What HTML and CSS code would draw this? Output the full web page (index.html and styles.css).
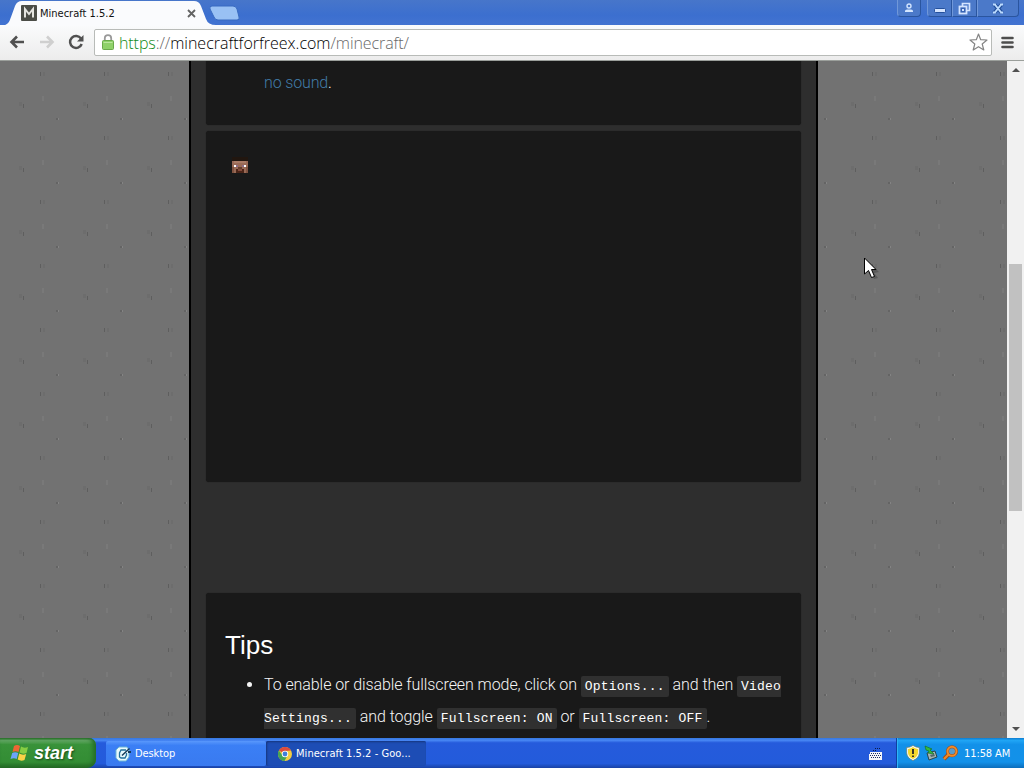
FILE: index.html
```
<!DOCTYPE html>
<html lang="en">
<head>
  <meta charset="UTF-8">
  <title>Minecraft 1.5.2</title>
  <link rel="stylesheet" href="styles.css">
</head>
<body>
  <div class="tabstrip">
    <svg class="tab-shapes" width="250" height="26" viewBox="0 0 250 26">
      <path d="M0 26 C9 25 9 22 11 17 L15 6 Q17 1 22 1 H194 Q199 1 201 6 L206 19 Q208 25 216 25 V26 Z" fill="#fafbfd" />
      <path d="M212 6 H233 Q236 6 237 9 L239 17 Q240 20 237 20 H218 Q215 20 214 17 L210 9 Q209 6 212 6 Z" fill="#99c1f4" stroke="#386ac0" />
    </svg>
    <div class="tab">
      <svg width="16" height="16" viewBox="0 0 16 16">
        <rect width="16" height="16" rx="1" fill="#4b4d47" />
        <path d="M4 12.500V4L8 9L12 4V12.500" fill="none" stroke="#e4e4e0" stroke-width="2" />
      </svg>
      <span class="tab-title">Minecraft 1.5.2</span>
      <svg class="tab-close" width="9" height="9" viewBox="0 0 9 9">
        <path d="M1 1L8 8M8 1L1 8" stroke="#636363" stroke-width="1.8" />
      </svg>
    </div>
    <div class="window-buttons">
      <div class="win-btn user">
        <svg width="10" height="10" viewBox="0 0 10 10"><circle cx="5" cy="3" r="2" fill="#4b78c8" stroke="#d4e6ff" stroke-width="1.4" /><path d="M1 9V8Q1 6.5 3 6.5H7Q9 6.5 9 8V9Z" fill="#d4e6ff" /></svg>
      </div>
      <div class="win-group">
        <div class="win-btn min"><svg width="12" height="10" viewBox="0 0 12 10"><rect x=".5" y="5.5" width="11" height="4" rx="1" fill="#d4e4ff" stroke="#24509c" /></svg></div>
        <div class="win-btn max"><svg width="13" height="13" viewBox="0 0 13 13"><path d="M4.5 4V1.5H11.5V8.5H9" fill="none" stroke="#d4e4ff" stroke-width="1.7" /><rect x="1.5" y="4.5" width="7" height="7" fill="#3764b5" stroke="#d4e4ff" stroke-width="1.8" /><rect x="4" y="7" width="2" height="2" fill="#d4e4ff" /></svg></div>
        <div class="win-btn close"><svg width="12" height="11" viewBox="0 0 12 11"><path d="M2 1L10 10M10 1L2 10" stroke="#24509c" stroke-width="4" /><path d="M2.500 1L9.500 10M9.500 1L2.500 10M1 1.500H4M8 1.500H11M1 9.500H4M8 9.500H11" stroke="#bddcff" stroke-width="1.9" /></svg></div>
      </div>
    </div>
  </div>

  <div class="toolbar">
    <svg class="nav-icon" width="16" height="14" viewBox="0 0 16 14"><path d="M15 7H3M8 1.5L2.5 7L8 12.5" fill="none" stroke="#505050" stroke-width="2.6" /></svg>
    <svg class="nav-icon" width="16" height="14" viewBox="0 0 16 14"><path d="M1 7H13M8 1.5L13.5 7L8 12.5" fill="none" stroke="#cfcfcf" stroke-width="2.6" /></svg>
    <svg class="nav-icon" width="16" height="16" viewBox="0 0 16 16"><path d="M13 4.5A6 6 0 1 0 13.7 10" fill="none" stroke="#505050" stroke-width="2.5" /><path d="M15.5 1V7.5H9Z" fill="#505050" /></svg>
    <div class="address">
      <svg class="lock" width="12" height="16" viewBox="0 0 12 16">
        <path d="M2.8 8V4.5Q2.8 1.2 6 1.2Q9.2 1.2 9.2 4.5V8" fill="none" stroke="#999" stroke-width="1.8" />
        <rect x=".5" y="6.5" width="11" height="9" rx="1" fill="#8fd169" stroke="#6aa94a" />
        <path d="M1.500 8.500H10.500" stroke="#bce69f" />
      </svg>
      <div class="url"><span class="secure">https</span>://<span class="host">minecraftforfreex.com</span>/minecraft/</div>
      <svg class="star" width="19" height="18" viewBox="0 0 19 18"><path d="M9.500 1L11.700 6.700L18 7L13.200 11L14.800 17L9.500 13.700L4.200 17L5.800 11L1 7L7.300 6.700Z" fill="#fff" stroke="#858585" stroke-width="1.2" stroke-linejoin="round" /></svg>
    </div>
    <svg class="menu-icon" width="13" height="13" viewBox="0 0 13 13"><path d="M1.500 2H11.500M1.500 6.500H11.500M1.500 11H11.500" stroke="#4d4d4d" stroke-width="2.6" stroke-linecap="round" /></svg>
  </div>

  <div class="viewport">
    <div class="page">
      <div class="container">
        <div class="panel panel-sound"><p><a class="link">no sound</a>.</p></div>
        <div class="panel panel-game">
          <svg width="16" height="17" viewBox="0 0 16 17" shape-rendering="crispEdges">
            <path d="M0 1H16V5H0Z" fill="#21160f" />
            <path d="M0 5H16V17H0Z" fill="#996a56" />
            <path d="M2 5H14V7H2Z" fill="#a97b66" />
            <path d="M0 11H2V17H0ZM14 11H16V17H14Z" fill="#805340" />
            <path d="M2 9H4V11H2ZM12 9H14V11H12Z" fill="#fff" />
            <path d="M4 9H6V11H4ZM10 9H12V11H10Z" fill="#8d6d85" />
            <path d="M6 11H10V13H6Z" fill="#65402f" />
            <path d="M4 13H6V17H4ZM10 13H12V17H10ZM6 15H10V17H6Z" fill="#4b2518" />
            <path d="M6 13H10V15H6Z" fill="#864b3c" />
          </svg>
        </div>
        <div class="panel panel-tips">
          <h2>Tips</h2>
          <ul>
            <li>To enable or disable fullscreen mode, click on <code>Options...</code> and then <code>Video Settings...</code> and toggle <code>Fullscreen: ON</code> or <code>Fullscreen: OFF</code>.</li>
          </ul>
        </div>
      </div>
    </div>
    <div class="scrollbar">
      <svg width="8" height="4" viewBox="0 0 8 4"><path d="M0 4L4 0L8 4Z" fill="#505050" /></svg>
      <div class="thumb"></div>
      <svg width="8" height="4" viewBox="0 0 8 4"><path d="M0 0L4 4L8 0Z" fill="#505050" /></svg>
    </div>
  </div>

  <div class="taskbar">
    <div class="start">
      <svg width="19" height="18" viewBox="0 0 19 18">
        <path d="M4 2Q7 0 10 2L8.500 8Q5.500 6.500 2.500 8Z" fill="#ee6634" />
        <path d="M11 2.500Q14 4.500 18 3L16.500 9Q13 10.500 9.500 8.500Z" fill="#86cd43" />
        <path d="M2.200 9Q5 7.500 8.200 9L6.700 15Q4 13.500 .5 15Z" fill="#6ca4fa" />
        <path d="M9.200 9.500Q12.500 11.500 16.200 10L14.500 16Q11 17.500 7.700 15.500Z" fill="#fbd247" />
      </svg>
      <span>start</span>
    </div>
    <div class="task desktop">
      <svg width="16" height="16" viewBox="0 0 16 16">
        <path d="M4 1H12L14 4V11L11 15H4L1 12V4Z" fill="#e8fafd" stroke="#6cb5d6" />
        <path d="M11 4H6L4.500 7V11L6 12H10L11.500 9V7" fill="none" stroke="#23719c" stroke-width="1.300" />
        <path d="M7 9.500L14.500 2.500" stroke="#153a59" stroke-width="1.5" />
        <path d="M13 6H16" stroke="#153a59" stroke-width="2" />
      </svg>
      <span>Desktop</span>
    </div>
    <div class="task chrome">
      <svg width="14" height="14" viewBox="0 0 14 14">
        <circle cx="7" cy="7" r="7" fill="#f4cd42" />
        <path d="M7 7L.9 3.500A7 7 0 0 1 13.100 3.500L7 4Z" fill="#dd4b3e" />
        <path d="M.9 3.500A7 7 0 0 0 6.500 14L9.500 8.500L7 7L4.500 8.500Z" fill="#45a455" />
        <circle cx="7" cy="7" r="3.200" fill="#fff" /><circle cx="7" cy="7" r="2.400" fill="#407edb" />
      </svg>
      <span>Minecraft 1.5.2 - Goo...</span>
    </div>
    <svg class="keyboard" width="14" height="14" viewBox="0 0 14 14" shape-rendering="crispEdges">
      <path d="M4 3.500H7M6 1.500H11" fill="none" stroke="#0c1c48" stroke-dasharray="1 1" />
      <path d="M1 5H13V13H0V9Z" fill="#f4f5f7" />
      <path d="M2 6.500H12M1 8.500H12M2 10.500H12" stroke="#182b63" stroke-dasharray="1 1" />
    </svg>
    <div class="tray">
      <svg width="14" height="16" viewBox="0 0 14 16"><path d="M7 .5Q10 2.500 13.300 2.500V8Q13 13 7 15.500Q1 13 .7 8V2.500Q4 2.500 7 .5Z" fill="#fff" stroke="#6d7d66" stroke-width=".7" /><path d="M7 2Q9 3.500 12 4V8Q11.500 12 7 14Q2.500 12 2 8V4Q5 3.500 7 2Z" fill="#f4d82c" /><path d="M7 4V9M7 10.500V12" stroke="#252525" stroke-width="1.800" /></svg>
      <svg width="14" height="16" viewBox="0 0 14 16"><path d="M3 8L11 6L13 12L5 15Z" fill="#a6b4b2" stroke="#28444d" /><path d="M6 10L10 9L11 11L7 12Z" fill="#54686c" /><path d="M1 1L8 4L6 5L10 9L4 8L5 6L2 5Z" fill="#35ba3d" stroke="#17722a" stroke-width=".7" /></svg>
      <svg width="17" height="16" viewBox="0 0 17 16"><path d="M7 9L2 14" stroke="#9b4c1b" stroke-width="4" /><circle cx="10" cy="6.300" r="4.500" fill="#5a9bc8" stroke="#9b4c1b" stroke-width="3" /><circle cx="10" cy="6.300" r="4.500" fill="none" stroke="#f08a28" stroke-width="2" /><path d="M7 9L2 14" stroke="#f08a28" stroke-width="2.200" /></svg>
      <span>11:58 AM</span>
    </div>
  </div>

  <svg class="cursor" width="18" height="24" viewBox="0 0 18 24">
    <path d="M4 4L15 15L10 16L14 21L10 22Z" fill="#414141" opacity=".5" />
    <path d="M.5 1V17L4.500 13.500L7.500 20.500L10.500 19.500L7.500 12.500H12Z" fill="#fff" stroke="#000" />
  </svg>
</body>
</html>
```
FILE: styles.css
```
* {
  box-sizing: border-box;
}

body {
  margin: 0;
  width: 1024px;
  height: 768px;
  overflow: hidden;
  display: flex;
  flex-direction: column;
  font-family: "Liberation Sans", sans-serif;
}

svg {
  display: block;
  flex-shrink: 0;
}

.tabstrip {
  position: relative;
  height: 25px;
  flex-shrink: 0;
  display: flex;
  justify-content: space-between;
  background: linear-gradient(#4776ca, #3c6fcf 60%, #4273d1);
}

.tab-shapes {
  position: absolute;
  left: 0;
  top: 0;
}

.tab {
  position: relative;
  width: 200px;
  height: 25px;
  padding: 1px 4px 0 21px;
  display: flex;
  align-items: center;
}

.tab-title {
  font: 11px "DejaVu Sans Condensed", "DejaVu Sans", sans-serif;
  margin-left: 3px;
  color: #111;
}

.tab-close {
  margin-left: auto;
}

.window-buttons {
  display: flex;
  padding-right: 5px;
}

.win-group {
  display: flex;
  margin-left: 6px;
}

.win-btn {
  width: 25px;
  height: 17px;
  display: flex;
  align-items: center;
  justify-content: center;
  background: #4b79c9;
  border: 1px solid #2a559f;
  border-top: 0;
  border-left-color: #7198d9;
}

.user {
  width: 24px;
  border-radius: 0 0 4px 4px;
}

.min {
  border-radius: 0 0 0 4px;
}

.close {
  width: 42px;
  border-radius: 0 0 4px 0;
}

.toolbar {
  height: 36px;
  flex-shrink: 0;
  display: flex;
  align-items: center;
  padding: 0 10px 1px 9px;
  background: linear-gradient(#fafbfc, #ececec);
  border-bottom: 1px solid #9b9f9b;
}

.nav-icon {
  margin-right: 14px;
}

.nav-icon + .nav-icon {
  margin-right: 13px;
}

.toolbar .nav-icon:nth-child(3) {
  margin-right: 10px;
}

.address {
  width: 898px;
  height: 27px;
  display: flex;
  align-items: center;
  background: #fff;
  border: 1px solid #b8bbb8;
  border-radius: 2px;
  padding: 0 3px 0 7px;
}

.url {
  font: 300 16px/20px "Open Sans", sans-serif;
  letter-spacing: -0.09px;
  color: #686868;
  margin: 2px 0 0 5px;
  white-space: nowrap;
}

.secure {
  color: #128b20;
}

.host {
  color: #000;
  letter-spacing: 0;
}

.star {
  margin-left: auto;
}

.menu-icon {
  margin-left: auto;
}

.viewport {
  height: 677px;
  display: flex;
  overflow: hidden;
}

.page {
  width: 1007px;
  height: 677px;
  overflow: hidden;
  padding-left: 189px;
  background-color: #727272;
  background-image: url("data:image/svg+xml,%3Csvg xmlns='http://www.w3.org/2000/svg' width='64' height='64'%3E%3Cpath d='M40 11h1v4h-1zM23 43h1v4h-1z' fill='%235e5e5e'/%3E%3Cpath d='M43 11h2v4h-2zM19 41h3v4h-3z' fill='%236d6d6d'/%3E%3Cpath d='M42 35h2v5h-2z' fill='%23797979'/%3E%3Cpath d='M56 57h2v2h-2z' fill='%23646464'/%3E%3Cpath d='M58 57h1v2h-1z' fill='%23848484'/%3E%3C/svg%3E");
}

.container {
  width: 629px;
  height: 677px;
  padding: 0 15px;
  border: solid #000;
  border-width: 0 2px;
  background: #2e2e2e;
}

.panel {
  background: #191919;
  color: #f5f5f5;
  border-radius: 3px;
  box-shadow: 0 0 1px #151515;
}

.panel-sound {
  height: 64px;
  padding: 6px 58px;
  border-radius: 0 0 3px 3px;
}

.panel-sound p {
  margin: 0;
  font: 300 16px/32px Roboto, "Liberation Sans", sans-serif;
  letter-spacing: -0.15px;
}

.link {
  color: #427ca8;
}

.panel-game {
  height: 351px;
  margin: 6px 0 111px;
  padding: 25px 26px;
}

.panel-tips {
  height: 150px;
  padding: 36px 19px 0;
}

.panel-tips h2 {
  margin: 0;
  font-size: 26px;
  font-weight: normal;
  line-height: 32px;
  color: #fff;
}

.panel-tips ul {
  margin: 8px 0 0;
  padding-left: 39px;
}

.panel-tips li {
  font: 300 16px/32px Roboto, "Liberation Sans", sans-serif;
  letter-spacing: -0.08px;
}

.panel-tips code {
  font: 13px/18px "Liberation Mono", monospace;
  letter-spacing: 0.2px;
  background: #303030;
  padding: 3px 4px;
  border-radius: 2px;
  color: #fff;
}

.scrollbar {
  width: 17px;
  height: 677px;
  display: flex;
  flex-direction: column;
  align-items: center;
  padding: 7px 0 7px;
  background: #f1f1f1;
}

.thumb {
  width: 13px;
  height: 247px;
  margin: 192px 0 auto;
  background: #c1c1c1;
}

.taskbar {
  height: 30px;
  flex-shrink: 0;
  display: flex;
  background: linear-gradient(#3577de, #4685f3 8%, #255bdc 16%, #235bdb 85%, #1942a5);
  font: 11px "DejaVu Sans Condensed", "DejaVu Sans", sans-serif;
  color: #fff;
}

.start {
  width: 96px;
  height: 30px;
  display: flex;
  align-items: center;
  padding-left: 10px;
  background: linear-gradient(#2b722b, #65a966 8%, #389239 22%, #338d34 80%, #226723);
  border-radius: 0 7px 9px 0;
  box-shadow: inset -3px 0 4px #246d27;
}

.start span {
  font: italic bold 18px "Liberation Sans", sans-serif;
  margin-left: 5px;
  text-shadow: 1px 1px 2px #174b18;
}

.task {
  width: 160px;
  height: 25px;
  margin: 3px 0 0 10px;
  display: flex;
  align-items: center;
  padding-left: 9px;
  border-radius: 2px;
  background: linear-gradient(#5998fc, #3b7ff5 18%, #397af0);
}

.task span {
  margin-left: 4px;
  letter-spacing: -0.1px;
}

.chrome {
  margin-left: 0;
  padding-left: 12px;
  background: #1d4db5;
  box-shadow: inset 1px 1px 2px #16357c;
}

.chrome span {
  letter-spacing: 0.05px;
}

.keyboard {
  margin: 9px 13px 0 auto;
}

.tray {
  width: 128px;
  height: 30px;
  display: flex;
  align-items: center;
  gap: 4px;
  padding-left: 9px;
  background: linear-gradient(#0c7cd0, #20a5f5 8%, #1291e9 22%, #1391e9 80%, #0c6dbb);
  border-left: 1px solid #103fa0;
  box-shadow: inset 1px 0 #2eb5f7;
}

.tray span {
  margin-left: 1px;
  letter-spacing: -0.1px;
  white-space: nowrap;
}

.cursor {
  position: absolute;
  left: 864px;
  top: 257px;
}
```
